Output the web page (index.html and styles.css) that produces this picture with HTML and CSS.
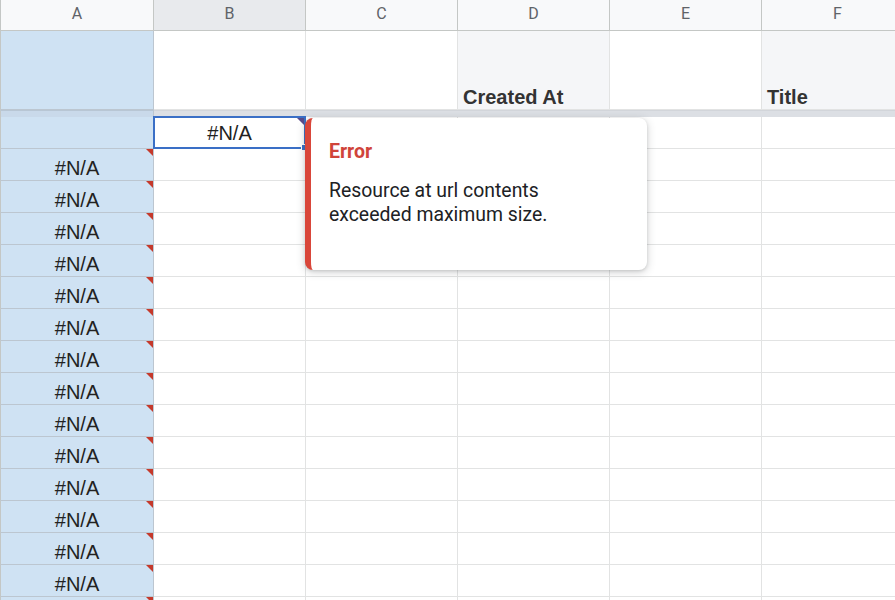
FILE: index.html
```html
<!DOCTYPE html>
<html>
<head>
<meta charset="utf-8">
<link rel="stylesheet" href="styles.css">
</head>
<body>
<div class="sheet">
  <div class="grid">
    <div class="hd first">A</div>
    <div class="hd sel">B</div>
    <div class="hd">C</div>
    <div class="hd">D</div>
    <div class="hd">E</div>
    <div class="hd">F</div>

    <div class="c a first"></div>
    <div class="c"></div>
    <div class="c"></div>
    <div class="c label">Created At</div>
    <div class="c"></div>
    <div class="c label">Title</div>

    <div class="band a first"></div>
    <div class="band"></div>
    <div class="band"></div>
    <div class="band"></div>
    <div class="band"></div>
    <div class="band"></div>

    <div class="c a first"></div>
    <div class="c active">#N/A<span class="handle"></span></div>
    <div class="c"></div>
    <div class="c"></div>
    <div class="c"></div>
    <div class="c"></div>
  </div>
  <div class="grid body" id="rows"></div>

  <div class="tip">
    <div class="tip-title">Error</div>
    <div class="tip-text">Resource at url contents<br>exceeded maximum size.</div>
  </div>
</div>
<script src="app.js"></script>
</body>
</html>
```

FILE: app.js
```js
(function () {
  var rows = document.getElementById('rows');
  var html = '';
  for (var i = 0; i < 15; i++) {
    html += '<div class="c a first err">' + (i < 14 ? '#N/A' : '') + '</div>';
    for (var j = 0; j < 5; j++) html += '<div class="c"></div>';
  }
  rows.innerHTML = html;
})();
```

FILE: styles.css
```css
* { box-sizing: border-box; }
html, body { margin: 0; padding: 0; background: #fff; overflow: hidden; }
body { width: 895px; height: 600px; font-family: "Liberation Sans", Arial, sans-serif; }

.sheet { position: relative; width: 895px; height: 600px; overflow: hidden; }

.grid {
  display: grid;
  grid-template-columns: 154px 152px 152px 152px 152px 152px;
  grid-template-rows: 31px 79px 7px 32px;
}
.grid.body { grid-auto-rows: 32px; grid-template-rows: none; }

.hd {
  background: #f8f9fa;
  border-right: 1px solid #c4c7c5;
  border-bottom: 1px solid #c4c7c5;
  color: #5f6368;
  font-family: Roboto, "Liberation Sans", sans-serif;
  font-size: 16px;
  display: flex;
  align-items: center;
  justify-content: center;
  padding-bottom: 3px;
}
.hd.sel { background: #e8eaed; }
.hd.first { border-left: 1px solid #c4c7c5; }

.c {
  position: relative;
  border-right: 1px solid #e2e3e3;
  border-bottom: 1px solid #e2e3e3;
  font-size: 20px;
  color: #222;
  display: flex;
  align-items: flex-end;
  justify-content: center;
  line-height: 24px;
  padding-bottom: 0;
}
.c.a {
  background: #cfe2f3;
  border-right-color: #bcc6d0;
  border-bottom-color: #bcc6d0;
}
.c.first { border-left: 1px solid #c4c7c5; }
.c.label {
  background: #f5f6f8;
  justify-content: flex-start;
  font-weight: bold;
  color: #333;
  padding-left: 5px;
  padding-bottom: 0;
}

.band {
  background: #dcdfe4;
  border-top: 1px solid #d2d5da;
}
.band.a { background: #c9d9ea; border-top-color: #b8c6d4; border-left: 1px solid #c4c7c5; border-right: 1px solid #bcc6d0; }

.c.err::after {
  content: "";
  position: absolute;
  top: 0;
  right: 0;
  width: 0;
  height: 0;
  border-top: 7px solid #c5392b;
  border-left: 7px solid transparent;
}

.c.active {
  border: 2px solid #3a6fc6;
  margin: -1px 0 0 -1px;
  width: 153px;
  padding-bottom: 2px;
}
.c.active::after {
  content: "";
  position: absolute;
  top: 0;
  right: 0;
  border-top: 7px solid #5a4a8a;
  border-left: 7px solid transparent;
}
.handle {
  position: absolute;
  right: -4px;
  bottom: -4px;
  width: 7px;
  height: 7px;
  background: #3a6fc6;
  border: 1px solid #fff;
  z-index: 2;
}

.tip {
  position: absolute;
  left: 305px;
  top: 118px;
  width: 342px;
  height: 152px;
  background: #fff;
  border-left: 6px solid #d9463a;
  border-radius: 8px;
  box-shadow: 0 2px 8px rgba(60, 64, 67, 0.25), 0 1px 3px rgba(60, 64, 67, 0.15);
  padding: 21px 18px 0 18px;
  font-family: Roboto, "Liberation Sans", sans-serif;
  z-index: 5;
}
.tip-title {
  color: #d0443a;
  font-size: 19.5px;
  font-weight: bold;
  line-height: 26px;
}
.tip-text {
  margin-top: 14px;
  color: #202124;
  font-size: 19.4px;
  line-height: 24px;
}
```
